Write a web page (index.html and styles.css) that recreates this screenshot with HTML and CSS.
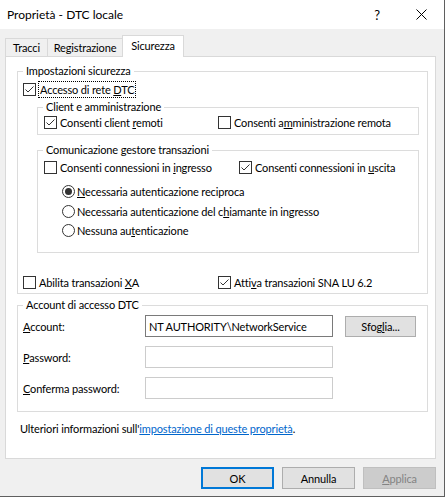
FILE: index.html
```html
<!DOCTYPE html>
<html lang="it">
<head>
<meta charset="utf-8">
<title>Proprietà - DTC locale</title>
<link rel="stylesheet" href="styles.css">
</head>
<body>
<div class="dialog">
  <div class="titlebar">
    <span class="title">Proprietà - DTC locale</span>
    <span class="help">?</span>
    <svg class="close" width="11" height="11" viewBox="0 0 11 11"><path d="M0.5 0.5 L10.5 10.5 M10.5 0.5 L0.5 10.5" stroke="#000" stroke-width="1" fill="none"/></svg>
  </div>
  <div class="tabs">
    <div class="tab tab-1">Tracci</div>
    <div class="tab tab-2">Registrazione</div>
    <div class="tab tab-3 active">Sicurezza</div>
  </div>
  <div class="panel">
    <fieldset class="group outer">
      <legend>Impostazioni sicurezza</legend>
      <div class="gbody outer-body">
        <div class="row row-focus">
          <span class="cb checked"><svg width="11" height="11" viewBox="0 0 11 11"><path d="M1.5 5.5 L4 8 L9.5 2.5" stroke="#333" stroke-width="1" fill="none"/></svg></span>
          <span class="focus">Accesso di rete <u>D</u>TC</span>
        </div>
        <fieldset class="group inner g-client">
          <legend>Client e amministrazione</legend>
          <div class="gbody inner-body client-body">
            <div class="row">
              <div class="opt w174"><span class="cb checked"><svg width="11" height="11" viewBox="0 0 11 11"><path d="M1.5 5.5 L4 8 L9.5 2.5" stroke="#333" stroke-width="1" fill="none"/></svg></span><span>Consenti client <u>r</u>emoti</span></div>
              <div class="opt"><span class="cb"></span><span>Consenti a<u>m</u>ministrazione remota</span></div>
            </div>
          </div>
        </fieldset>
        <fieldset class="group inner g-comm">
          <legend>Comunicazione gestore transazioni</legend>
          <div class="gbody inner-body comm-body">
            <div class="row">
              <div class="opt w195"><span class="cb"></span><span>Consenti connessioni in <u>i</u>ngresso</span></div>
              <div class="opt"><span class="cb checked"><svg width="11" height="11" viewBox="0 0 11 11"><path d="M1.5 5.5 L4 8 L9.5 2.5" stroke="#333" stroke-width="1" fill="none"/></svg></span><span>Consenti connessioni in <u>u</u>scita</span></div>
            </div>
            <div class="row radio-row r1"><span class="rb checked"></span><span><u>N</u>ecessaria autenticazione reciproca</span></div>
            <div class="row radio-row r2"><span class="rb"></span><span>Necessaria autenticazione del c<u>h</u>iamante in ingresso</span></div>
            <div class="row radio-row r3"><span class="rb"></span><span>Nessuna au<u>t</u>enticazione</span></div>
          </div>
        </fieldset>
        <div class="row xa-row">
          <div class="opt w195"><span class="cb"></span><span>Abilita transazioni <u>X</u>A</span></div>
          <div class="opt"><span class="cb checked"><svg width="11" height="11" viewBox="0 0 11 11"><path d="M1.5 5.5 L4 8 L9.5 2.5" stroke="#333" stroke-width="1" fill="none"/></svg></span><span>Atti<u>v</u>a transazioni SNA LU 6.2</span></div>
        </div>
      </div>
    </fieldset>
    <fieldset class="group account">
      <legend>Account di accesso DTC</legend>
      <div class="gbody account-body">
        <div class="frow">
          <span class="flabel"><u>A</u>ccount:</span>
          <input class="field" type="text" value="NT AUTHORITY\NetworkService">
          <button class="btn browse">Sfog<u>l</u>ia...</button>
        </div>
        <div class="frow gap9">
          <span class="flabel"><u>P</u>assword:</span>
          <input class="field off" type="password" disabled>
        </div>
        <div class="frow gap9">
          <span class="flabel"><u>C</u>onferma password:</span>
          <input class="field off" type="password" disabled>
        </div>
      </div>
    </fieldset>
    <p class="info">Ulteriori informazioni sull'<a href="#" class="link">impostazione di queste proprietà</a>.</p>
  </div>
  <div class="buttons">
    <button class="btn dlg default">OK</button>
    <button class="btn dlg">Annulla</button>
    <button class="btn dlg disabled"><u>A</u>pplica</button>
  </div>
</div>
</body>
</html>
```
FILE: styles.css
```css
* { box-sizing: border-box; }
html, body { margin: 0; padding: 0; background: #ffffff; }
body {
  font-family: Lato, "Open Sans", "Liberation Sans", sans-serif;
  font-size: 11px;
  letter-spacing: -0.15px;
  color: #000;
}
u { text-decoration: underline; text-underline-offset: 1px; }

.dialog {
  width: 445px;
  height: 497px;
  background: #f0f0f0;
  border-right: 1px solid #5f5f5f;
  border-bottom: 1px solid #5f5f5f;
  display: flex;
  flex-direction: column;
}

.titlebar {
  height: 29px;
  flex: none;
  background: #ffffff;
  display: flex;
  align-items: center;
  padding-left: 7px;
}
.title { font-size: 12px; letter-spacing: 0; }
.help { margin-left: auto; margin-right: 36px; font-size: 13px; }
.close { display: block; margin-right: 17px; }

.tabs {
  flex: none;
  display: flex;
  align-items: flex-end;
  height: 22px;
  margin-top: 6px;
  padding-left: 5px;
}
.tab {
  height: 18px;
  margin-bottom: 1px;
  border: 1px solid #d9d9d9;
  border-bottom: 0;
  background: #f0f0f0;
  text-align: center;
  line-height: 17px;
  white-space: nowrap;
}
.tab + .tab { margin-left: -1px; }
.tab-1 { width: 43px; }
.tab-2 { width: 76px; }
.tab-3 { width: 62px; }
.tab.active {
  height: 22px;
  margin-bottom: 0;
  background: #ffffff;
  line-height: 19px;
  position: relative;
  z-index: 1;
}

.panel {
  flex: none;
  margin: -1px 0 0 5px;
  width: 431px;
  height: 403px;
  background: #ffffff;
  border: 1px solid #d9d9d9;
  padding: 7px 7px 0 11px;
  display: flex;
  flex-direction: column;
}

.group {
  margin: 0;
  padding: 0;
  border: 1px solid #dcdcdc;
  min-width: 0;
}
.group > legend {
  margin-left: 5px;
  padding: 0 3px;
  line-height: 14px;
  white-space: nowrap;
}
.gbody { padding: 0; }
.outer-body { padding: 3px 8px 3px 5px; }
.inner { margin-left: 14px; }
.g-client { margin-top: 2px; }
.g-comm { margin-top: 8px; }
.client-body { padding: 0 6px 4px 6px; }
.comm-body { padding: 2px 6px 14px 6px; }

.row {
  display: flex;
  align-items: center;
  height: 16px;
  white-space: nowrap;
}
.row-focus { height: 17px; }
.opt { display: flex; align-items: center; }
.w174 { width: 174px; flex: none; }
.w195 { width: 195px; flex: none; }

.cb {
  flex: none;
  width: 13px;
  height: 13px;
  border: 1px solid #333333;
  background: #ffffff;
  margin-right: 3px;
  display: flex;
  align-items: center;
  justify-content: center;
}
.cb svg { display: block; }
.row-focus .cb { margin-right: 2px; }
.focus {
  border: 1px dotted #000;
  padding: 0 1px;
  line-height: 15px;
}

.rb {
  flex: none;
  width: 13px;
  height: 13px;
  border: 1px solid #333333;
  border-radius: 50%;
  background: #ffffff;
  margin-right: 2px;
  display: flex;
  align-items: center;
  justify-content: center;
}
.rb.checked::after {
  content: "";
  width: 7px;
  height: 7px;
  border-radius: 50%;
  background: #333333;
}
.radio-row { margin-left: 18px; }
.r1 { margin-top: 8px; }
.r2 { margin-top: 4px; }
.r3 { margin-top: 3px; }
.xa-row { margin-top: 21px; }

.account { margin-top: 4px; }
.account-body { padding: 3px 8px 12px 5px; }
.frow {
  display: flex;
  align-items: center;
  height: 22px;
}
.gap9 { margin-top: 9px; }
.flabel { width: 122px; flex: none; white-space: nowrap; }
.field {
  -webkit-appearance: none;
  appearance: none;
  width: 188px;
  height: 22px;
  flex: none;
  margin: 0;
  padding: 0 3px;
  border: 1px solid #7a7a7a;
  border-radius: 0;
  background: #ffffff;
  font: inherit;
  letter-spacing: inherit;
  color: #000;
  outline: none;
}
.field.off { border-color: #cccccc; background: #ffffff; }

.btn {
  -webkit-appearance: none;
  appearance: none;
  font: inherit;
  letter-spacing: inherit;
  color: #000;
  background: #e1e1e1;
  border: 1px solid #adadad;
  border-radius: 0;
  margin: 0;
  padding: 0;
  text-align: center;
}
.browse {
  width: 71px;
  height: 21px;
  margin-left: 12px;
  align-self: flex-start;
  margin-top: 1px;
}

.info {
  margin: 9px 0 0 3px;
  line-height: 15px;
  white-space: nowrap;
}
.link { color: #0066cc; text-decoration: underline; }

.buttons {
  flex: none;
  display: flex;
  justify-content: flex-end;
  gap: 8px;
  padding-right: 8px;
  margin-top: 8px;
}
.dlg { width: 73px; height: 22px; }
.dlg.default { border: 2px solid #0078d7; }
.dlg.disabled { background: #cccccc; border-color: #bfbfbf; color: #838383; }
```
